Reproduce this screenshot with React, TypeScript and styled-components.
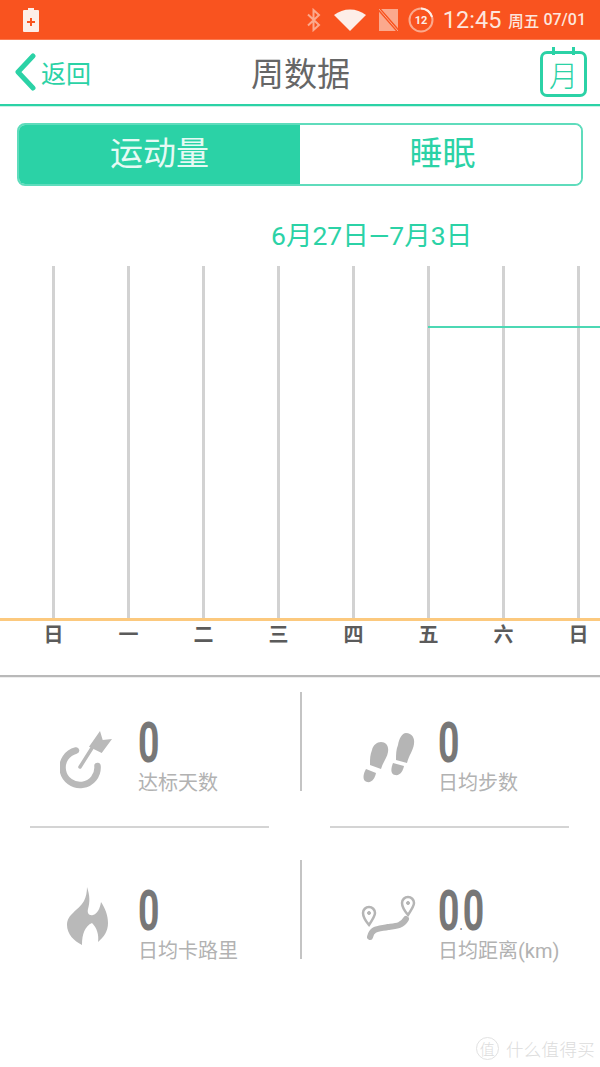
import React from 'react';
import styled, { createGlobalStyle } from 'styled-components';

const TEAL = '#2bd2a6';

const GlobalStyle = createGlobalStyle`
  html, body {
    margin: 0;
    padding: 0;
    background: #fff;
  }
  body {
    font-family: "Noto Sans CJK SC", "Noto Sans", sans-serif;
  }
`;

const Page = styled.div`
  position: relative;
  width: 600px;
  height: 1067px;
  overflow: hidden;
  background: #fff;
`;

const StatusBar = styled.div`
  height: 39px;
  border-bottom: 1px solid #fb7a50;
  background: #f9531f;
  display: flex;
  align-items: center;
  padding: 0 14px 0 22px;
  color: #fde6dd;
`;

const StatusIcons = styled.div`
  margin-left: auto;
  display: flex;
  align-items: center;
`;

const StatusGap = styled.span<{ $w: number }>`
  width: ${p => p.$w}px;
`;

const Clock = styled.span`
  font-family: Roboto, sans-serif;
  font-size: 23.5px;
  margin-left: 9px;
`;

const WeekDay = styled.span`
  font-size: 15.5px;
  font-weight: 500;
  margin-left: 7px;
`;

const DateText = styled.span`
  font-family: Roboto, sans-serif;
  font-size: 16px;
  font-weight: 500;
  margin-left: 4px;
`;

const Header = styled.header`
  height: 64px;
  border-bottom: 2px solid ${TEAL};
  display: grid;
  grid-template-columns: 1fr auto 1fr;
  align-items: center;
  padding: 0 13px 0 14px;
  box-shadow: 0 1px 0 #c8f2e6;
`;

const BackLink = styled.div`
  display: flex;
  align-items: center;
  gap: 4px;
  color: ${TEAL};
  font-size: 25px;
`;

const Title = styled.h1`
  margin: 0;
  font-size: 33px;
  font-weight: 400;
  color: #666;
  line-height: 1;
`;

const CalendarBadge = styled.div`
  position: relative;
  justify-self: end;
  top: 2px;
  width: 41px;
  height: 40px;
  border: 3px solid ${TEAL};
  border-radius: 7px;
  color: ${TEAL};
  font-size: 29px;
  font-weight: 300;
  line-height: 40px;
  text-align: center;

  &::before,
  &::after {
    content: '';
    position: absolute;
    top: -7px;
    width: 3px;
    height: 8px;
    background: ${TEAL};
  }
  &::before {
    left: 9px;
  }
  &::after {
    right: 9px;
  }
`;

const Tabs = styled.div`
  margin: 17px 17px 0;
  height: 63px;
  box-sizing: border-box;
  border: 2px solid #5fdcbc;
  border-radius: 8px;
  overflow: hidden;
  display: grid;
  grid-template-columns: 281px 1fr;
`;

const Tab = styled.div<{ $active?: boolean }>`
  display: flex;
  align-items: center;
  justify-content: center;
  padding-bottom: 7px;
  padding-left: ${p => (p.$active ? 0 : 4)}px;
  font-size: 33px;
  background: ${p => (p.$active ? TEAL : '#fff')};
  color: ${p => (p.$active ? '#e6faf4' : TEAL)};
`;

const WeekRange = styled.div`
  margin: 30px 0 0 271px;
  height: 50px;
  font-family: Roboto, "Noto Sans CJK SC", sans-serif;
  font-size: 26.5px;
  line-height: 40px;
  color: ${TEAL};
  white-space: nowrap;
`;

const Chart = styled.div`
  position: relative;
  height: 352px;
  border-bottom: 3px solid #fcc97e;
  display: grid;
  grid-template-columns: repeat(8, 75px);
  padding-left: 16px;
`;

const GridLine = styled.div`
  justify-self: center;
  width: 3px;
  background: #d2d2d2;
`;

const GoalLine = styled.div`
  position: absolute;
  left: 428px;
  right: 0;
  top: 60px;
  height: 2px;
  background: #4cd8b4;
`;

const Axis = styled.div`
  height: 54px;
  display: grid;
  grid-template-columns: repeat(8, 75px);
  padding-left: 16px;
  border-bottom: 2px solid #b9b9b9;
  box-shadow: 0 1px 0 #eee;
`;

const AxisLabel = styled.div`
  text-align: center;
  font-size: 20px;
  font-weight: 700;
  line-height: 25px;
  color: #5b5b5b;
`;

const StatRow = styled.div`
  display: grid;
  grid-template-columns: 300px 2px 1fr;
  grid-template-rows: 99px;
`;

const StatsTop = styled(StatRow)`
  margin-top: 15px;
`;

const RowDivider = styled.div`
  width: 2px;
  background: #c4c4c4;
`;

const Stat = styled.div<{ $inset: number }>`
  display: flex;
  padding-left: ${p => p.$inset}px;
`;

const StatIcon = styled.div<{ $left: number; $top: number }>`
  box-sizing: border-box;
  width: 80px;
  flex: none;
  padding: ${p => p.$top}px 0 0 ${p => p.$left}px;
`;

const StatBody = styled.div`
  padding-top: 22px;
`;

const StatValue = styled.div`
  font-family: Roboto, sans-serif;
  font-size: 55px;
  font-weight: 700;
  line-height: 58px;
  color: #777;
  transform: scaleX(0.68);
  transform-origin: left center;
  white-space: nowrap;
`;

const StatDot = styled.span`
  font-size: 18px;
  font-weight: 400;
  line-height: 0;
`;

const StatLabel = styled.div`
  font-family: Roboto, "Noto Sans CJK SC", sans-serif;
  font-size: 20px;
  line-height: 26px;
  margin-top: -2px;
  color: #b2b2b2;
  white-space: nowrap;
`;

const Rules = styled.div`
  display: flex;
  justify-content: space-between;
  padding: 35px 31px 32px 30px;
`;

const Rule = styled.div`
  width: 239px;
  height: 2px;
  background: #d4d4d4;
`;

const Watermark = styled.div`
  position: absolute;
  right: 5px;
  bottom: 6px;
  display: flex;
  align-items: center;
  gap: 7px;
  color: #dcdcdc;
  font-size: 17.5px;
  font-weight: 300;
  letter-spacing: 0.3px;
`;

const WatermarkSeal = styled.span`
  width: 21px;
  height: 21px;
  border: 1px solid #e2e2e2;
  border-radius: 50%;
  font-size: 15px;
  line-height: 21px;
  text-align: center;
`;

const days = ['日', '一', '二', '三', '四', '五', '六', '日'];

const BatteryIcon = () => (
  <svg width="18" height="26" viewBox="0 0 18 26">
    <path d="M6 1h6v2h4a1 1 0 0 1 1 1v20a1 1 0 0 1-1 1H2a1 1 0 0 1-1-1V4a1 1 0 0 1 1-1h4z" fill="#fdeee8" />
    <path d="M8 11h2v3h3v2h-3v3H8v-3H5v-2h3z" fill="#f9531f" />
  </svg>
);

const BluetoothIcon = () => (
  <svg width="16" height="24" viewBox="0 0 16 24" fill="none" stroke="#fba98d" strokeWidth="2">
    <path d="M2 6.500l11 10.500-5.500 5V2l5.500 5L2 17.500" />
  </svg>
);

const WifiIcon = () => (
  <svg width="32" height="22" viewBox="0 0 32 22">
    <path d="M0 6C9-1.500 23-1.500 32 6L16 22z" fill="#fdeee8" />
  </svg>
);

const NoSimIcon = () => (
  <svg width="19" height="22" viewBox="0 0 19 22">
    <path d="M0 0h19v22H0z" fill="#fba98d" />
    <path d="M-1-1l21 24" stroke="#f9531f" strokeWidth="3.500" />
    <path d="M0 0l19 22" stroke="#fba98d" strokeWidth="1" />
  </svg>
);

const TimerIcon = () => (
  <svg width="26" height="26" viewBox="0 0 26 26" fill="none">
    <circle cx="13" cy="13" r="11.500" stroke="#fba98d" strokeWidth="2" />
    <path d="M13 1.500A11.500 11.500 0 0 1 24 10" stroke="#fdeee8" strokeWidth="2" />
    <text x="13" y="17" fontSize="11" fontWeight="700" textAnchor="middle" fill="#fdeee8" fontFamily="Roboto, sans-serif">12</text>
  </svg>
);

const BackIcon = () => (
  <svg width="23" height="38" viewBox="0 0 23 38" fill="none" stroke={TEAL} strokeWidth="5" strokeLinecap="round" strokeLinejoin="round">
    <path d="M19 3L4 19l15 16" />
  </svg>
);

const TargetIcon = () => (
  <svg width="54" height="60" viewBox="0 0 54 60" fill="none">
    <path d="M16 20.500A17.500 17.500 0 1 0 37.500 36" stroke="#b9b9b9" strokeWidth="6.500" strokeLinecap="round" />
    <path d="M20 37l12-19" stroke="#b9b9b9" strokeWidth="3.500" strokeLinecap="round" />
    <path d="M40 1l2.700 9L52 9 41.700 23 29 16.700z" fill="#b9b9b9" />
  </svg>
);

const StepsIcon = () => (
  <svg width="53" height="51" viewBox="0 0 53 51" fill="#b5b5b5">
    <path d="M19 9c5 0 8 4 7 10-1 6-5 10-7 17L8 32c0-6 0-10 2-15 1-5 5-8 9-8z" />
    <path d="M4 36l10 4c-1 5-4 10-9 9-5-1-4-8-1-13z" />
    <path d="M44 0c6 0 9 5 8 11-1 7-5 11-7 19l-11-3c0-6 0-10 2-15 1-6 4-12 8-12z" />
    <path d="M31 30l11 3c-1 5-4 10-9 9-5-1-4-7-2-12z" />
  </svg>
);

const FlameIcon = () => (
  <svg width="44" height="62" viewBox="0 0 44 62" fill="#b9b9b9">
    <path d="M21 1c3 9 3 15 1 22-1 4 1 7 5 6 4-1 7-6 8-13 4 6 7 13 7 21 0 8-4 14-10 19 1-7-1-14-6-19-7 3-10 11-10 22C8 55 1 48 1 39 1 28 12 25 18 15c2-4 3-9 3-14z" />
  </svg>
);

const RouteIcon = () => (
  <svg width="56" height="50" viewBox="0 0 56 50" fill="none" stroke="#b5b5b5">
    <path d="M9 42c2-9 8-8 18-10 8-1 14-1 18-8" strokeWidth="6" strokeLinecap="round" />
    <path d="M8 30C3 24 2 21 2 18a6 6 0 0 1 12 0c0 3-2 6-6 12z" strokeWidth="2.500" />
    <circle cx="8" cy="18" r="1.500" fill="#b5b5b5" />
    <path d="M47 20c-5-6-6-9-6-12a6 6 0 0 1 12 0c0 3-2 6-6 12z" strokeWidth="2.500" />
    <circle cx="47" cy="8" r="1.500" fill="#b5b5b5" />
  </svg>
);

const App: React.FC = () => {
  return (
    <Page>
      <GlobalStyle />
      <StatusBar>
        <BatteryIcon />
        <StatusIcons>
          <BluetoothIcon />
          <StatusGap $w={12} />
          <WifiIcon />
          <StatusGap $w={13} />
          <NoSimIcon />
          <StatusGap $w={10} />
          <TimerIcon />
          <Clock>12:45</Clock>
          <WeekDay>周五</WeekDay>
          <DateText>07/01</DateText>
        </StatusIcons>
      </StatusBar>

      <Header>
        <BackLink>
          <BackIcon />
          返回
        </BackLink>
        <Title>周数据</Title>
        <CalendarBadge>月</CalendarBadge>
      </Header>

      <Tabs>
        <Tab $active>运动量</Tab>
        <Tab>睡眠</Tab>
      </Tabs>

      <WeekRange>6月27日—7月3日</WeekRange>

      <Chart>
        {days.map((_, i) => (
          <GridLine key={i} />
        ))}
        <GoalLine />
      </Chart>
      <Axis>
        {days.map((d, i) => (
          <AxisLabel key={i}>{d}</AxisLabel>
        ))}
      </Axis>

      <StatsTop>
        <Stat $inset={58}>
          <StatIcon $left={2} $top={38}><TargetIcon /></StatIcon>
          <StatBody>
            <StatValue>0</StatValue>
            <StatLabel>达标天数</StatLabel>
          </StatBody>
        </Stat>
        <RowDivider />
        <Stat $inset={56}>
          <StatIcon $left={4} $top={41}><StepsIcon /></StatIcon>
          <StatBody>
            <StatValue>0</StatValue>
            <StatLabel>日均步数</StatLabel>
          </StatBody>
        </Stat>
      </StatsTop>

      <Rules>
        <Rule />
        <Rule />
      </Rules>

      <StatRow>
        <Stat $inset={58}>
          <StatIcon $left={8} $top={26}><FlameIcon /></StatIcon>
          <StatBody>
            <StatValue>0</StatValue>
            <StatLabel>日均卡路里</StatLabel>
          </StatBody>
        </Stat>
        <RowDivider />
        <Stat $inset={56}>
          <StatIcon $left={3} $top={35}><RouteIcon /></StatIcon>
          <StatBody>
            <StatValue>0<StatDot>.</StatDot>0</StatValue>
            <StatLabel>日均距离(km)</StatLabel>
          </StatBody>
        </Stat>
      </StatRow>

      <Watermark>
        <WatermarkSeal>值</WatermarkSeal>
        什么值得买
      </Watermark>
    </Page>
  );
};

export default App;
